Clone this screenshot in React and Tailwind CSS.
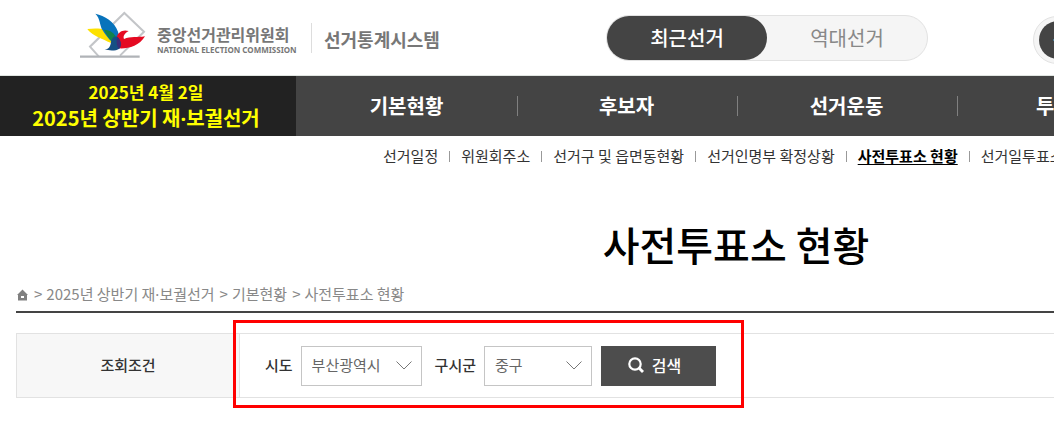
import React, { useState } from 'react';

const mainMenu = ['기본현황', '후보자', '선거운동', '투·개표', '당선인'];

const subMenu = [
  '선거일정',
  '위원회주소',
  '선거구 및 읍면동현황',
  '선거인명부 확정상황',
  '사전투표소 현황',
  '선거일투표소 현황',
];

const breadcrumbs = ['2025년 상반기 재·보궐선거', '기본현황', '사전투표소 현황'];

// The Korean font gives the middle dot a full-width box, so take it from Noto Sans
const DotText = ({ children }) =>
  children.split('·').map((part, i) => (
    <React.Fragment key={i}>
      {i > 0 && <span className="font-['Noto_Sans',sans-serif] leading-none">·</span>}
      {part}
    </React.Fragment>
  ));

const LogoMark = () => (
  <svg viewBox="24 27 207 147" className="w-[69px] h-[49px] mb-[7px] shrink-0" aria-hidden="true">
    <path d="M86 166 L60 137 L163 36 L222 92 L150 164" fill="none" stroke="#c3c5c8" strokeWidth="6" />
    <path d="M30 167 H209" stroke="#b0b3b7" strokeWidth="7" />
    <path d="M52 84 C80 80 112 82 132 98 L140 128 C128 128 116 124 102 116 C82 108 64 100 52 84 Z" fill="#fde100" />
    <path d="M76 38 C104 44 134 62 144 92 C148 106 148 120 142 134 C126 126 110 108 98 88 C88 72 92 54 76 38 Z" fill="#0873bb" />
    <path d="M102 86 C116 86 128 92 136 104 L138 130 C122 122 112 106 102 86 Z" fill="#12824b" />
    <path d="M176 90 C158 84 144 94 140 108 C138 124 140 134 146 142 C172 144 208 136 225 106 C202 110 182 106 162 114 C158 104 166 96 176 90 Z" fill="#e50a22" />
    <path d="M104 145 C118 144 122 134 123 122 C126 110 134 104 142 108 C152 116 156 132 148 143 C138 150 118 150 104 145 Z" fill="#154f84" />
    <path d="M142 108 C152 116 156 132 148 143 C140 138 138 122 142 108 Z" fill="#3b2d78" />
  </svg>
);

const SelectBox = ({ id, label, value, onChange, options, className }) => (
  <div className="flex items-center">
    <label htmlFor={id} className="mr-2 text-[15px] font-medium text-[#333]">
      {label}
    </label>
    <div className="relative">
      <select
        id={id}
        value={value}
        onChange={onChange}
        className={`h-10 pl-[10px] pr-8 appearance-none bg-white border border-[#c5c5c5] text-[15px] text-[#666] ${className}`}
      >
        {options.map((option) => (
          <option key={option}>{option}</option>
        ))}
      </select>
      <svg viewBox="0 0 16 9" className="absolute right-[10px] top-[15px] w-4 h-[9px] pointer-events-none" aria-hidden="true">
        <path d="M0.5 0.5 L8 8 L15.5 0.5" fill="none" stroke="#777" strokeWidth="1" />
      </svg>
    </div>
  </div>
);

const App = () => {
  const [tab, setTab] = useState('최근선거');
  const [city, setCity] = useState('부산광역시');
  const [town, setTown] = useState('중구');

  return (
    <div className="overflow-x-hidden bg-white font-['Noto_Sans_CJK_KR','Noto_Sans',sans-serif]">
      <div className="min-w-[1472px]">
        {/* Header */}
        <header className="flex items-center h-[76px] pl-[78px] border-b border-[#e0e5e1]">
          <a href="#" className="flex items-center w-[234px] h-[30px] gap-[10px] border-r border-[#ddd]">
            <LogoMark />
            <span className="block mt-1 whitespace-nowrap text-[#777]">
              <span className="block text-base leading-5 font-bold">중앙선거관리위원회</span>
              <span className="block text-[8px] leading-3 font-bold font-['Noto_Sans',sans-serif]">
                NATIONAL ELECTION COMMISSION
              </span>
            </span>
          </a>
          <a href="#" className="w-[281px] pl-3 pt-[3px] text-[18px] font-bold text-[#777]">
            선거통계시스템
          </a>
          <div className="flex ml-[13px] w-[322px] h-[46px] rounded-full border border-[#e2e2e2] bg-[#f5f5f5]">
            {['최근선거', '역대선거'].map((name) => (
              <button
                key={name}
                type="button"
                onClick={() => setTab(name)}
                className={`w-40 h-11 rounded-full text-xl ${
                  tab === name ? 'bg-[#444] font-medium text-white' : 'text-[#888]'
                }`}
              >
                {name}
              </button>
            ))}
          </div>
          <button
            type="button"
            aria-label="다음"
            className="flex items-center ml-[105px] w-[180px] h-12 mt-1 px-[5px] rounded-full border border-[#e2e2e2] bg-[#f5f5f5]"
          >
            <span className="flex items-center justify-center w-[38px] h-[38px] rounded-full bg-[#444]">
              <svg viewBox="0 0 10 10" className="w-[10px] h-[10px]" aria-hidden="true">
                <path d="M0 5 H10 M5 0 V10" stroke="#4fb4e6" strokeWidth="1" />
              </svg>
            </span>
          </button>
        </header>

        {/* Main navigation */}
        <nav className="flex h-[60px] bg-[#444]">
          <a
            href="#"
            className="flex flex-col items-center justify-center w-[296px] shrink-0 pr-1 bg-[#222] font-bold text-[#ff0]"
          >
            <span className="text-[17px] leading-6">2025년 4월 2일</span>
            <span className="text-xl leading-7">
              <DotText>2025년 상반기 재·보궐선거</DotText>
            </span>
          </a>
          <ul className="flex items-center pl-0.5">
            {mainMenu.map((name) => (
              <li key={name} className="flex items-center justify-center w-[220px] h-5 pr-0.5 border-r border-[#808080]">
                <a href="#" className="text-xl font-bold text-white">
                  <DotText>{name}</DotText>
                </a>
              </li>
            ))}
          </ul>
        </nav>

        {/* Sub navigation */}
        <ul className="flex items-center h-10 pl-[383px] text-[15px] text-[#333]">
          {subMenu.map((name, i) => (
            <li key={name} className="flex items-center">
              {i > 0 && <span className="mx-[11px] w-px h-[11px] bg-[#999]"></span>}
              <a
                href="#"
                className={name === '사전투표소 현황' ? 'font-bold text-black underline underline-offset-2' : ''}
              >
                {name}
              </a>
            </li>
          ))}
        </ul>

        <main className="px-4 pb-6">
          <h1 className="pt-[38px] text-center text-[40px] leading-[60px] font-medium text-black">사전투표소 현황</h1>

          {/* Breadcrumb */}
          <div className="flex items-center h-[39px] pt-1 border-b-2 border-[#444] text-[15px] text-[#888]">
            <a href="#" aria-label="홈">
              <svg viewBox="0 0 13 12" className="w-[13px] h-3" aria-hidden="true">
                <path
                  d="M6.5 0.5 L12 6 H11 V11.5 H2 V6 H1 Z M5 7 V9 H8 V7 Z"
                  fill="#808080"
                  fillRule="evenodd"
                />
              </svg>
            </a>
            {breadcrumbs.map((name) => (
              <span key={name} className="flex">
                <span className="ml-[5px] mr-1">&gt;</span>
                <a href="#">
                  <DotText>{name}</DotText>
                </a>
              </span>
            ))}
          </div>

          {/* Search conditions */}
          <form
            onSubmit={(e) => e.preventDefault()}
            className="flex h-[65px] mt-5 border border-[#e2e2e2]"
          >
            <div className="flex items-center justify-center w-[223px] bg-[#f7f7f7] border-r border-[#e2e2e2] text-[15px] font-medium text-[#333]">
              조회조건
            </div>
            <div className="relative flex items-center px-[25px]">
              <SelectBox
                id="city"
                label="시도"
                value={city}
                onChange={(e) => setCity(e.target.value)}
                options={['부산광역시', '서울특별시', '대구광역시']}
                className="w-[121px]"
              />
              <div className="ml-[13px]">
                <SelectBox
                  id="town"
                  label="구시군"
                  value={town}
                  onChange={(e) => setTown(e.target.value)}
                  options={['중구', '서구', '동구']}
                  className="w-[108px]"
                />
              </div>
              <button
                type="submit"
                className="flex items-center justify-center gap-2 ml-[9px] w-[115px] h-10 pr-2 pb-0.5 bg-[#4d4d4d] text-base font-medium text-white"
              >
                <svg viewBox="0 0 16 16" className="w-4 h-4" aria-hidden="true">
                  <circle cx="7" cy="7" r="5.7" fill="none" stroke="#fff" strokeWidth="2.2" />
                  <path d="M10.5 10.5 L15 15" stroke="#fff" strokeWidth="2.8" />
                </svg>
                검색
              </button>
              {/* Highlight frame */}
              <div className="absolute -left-[7px] -right-[3px] -top-[14px] -bottom-[11px] border-3 border-[#f00] pointer-events-none"></div>
            </div>
          </form>
        </main>
      </div>
    </div>
  );
};

export default App;
